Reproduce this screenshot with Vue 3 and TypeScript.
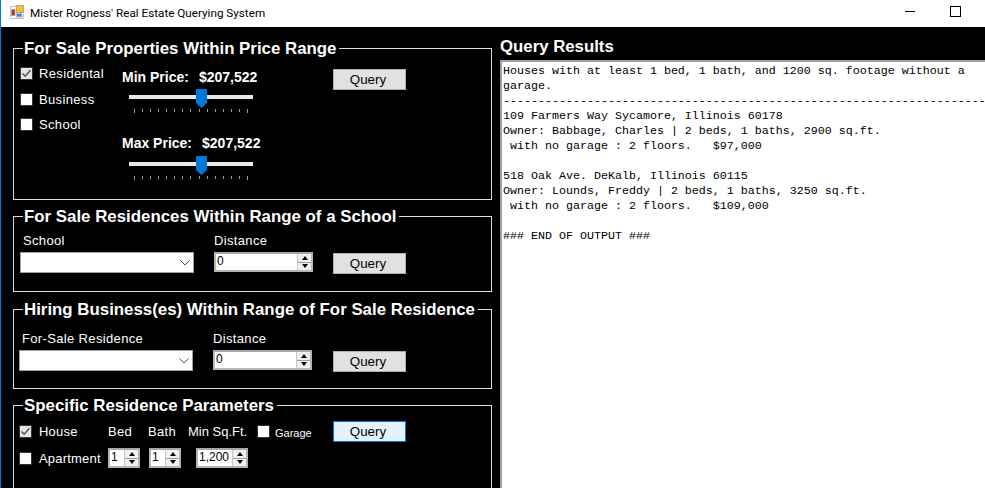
<script setup lang="ts">
const ticks: number[] = Array.from({ length: 15 }, (_, i) => i)
const prices = [
  { label: 'Min Price:', value: '$207,522', cls: 'min' },
  { label: 'Max Price:', value: '$207,522', cls: 'max' },
]
const kinds = [
  { label: 'Residental', checked: true },
  { label: 'Business', checked: false },
  { label: 'School', checked: false },
]
const output = `Houses with at least 1 bed, 1 bath, and 1200 sq. footage without a
garage.
${'-'.repeat(69)}
109 Farmers Way Sycamore, Illinois 60178
Owner: Babbage, Charles | 2 beds, 1 baths, 2900 sq.ft.
 with no garage : 2 floors.   $97,000

518 Oak Ave. DeKalb, Illinois 60115
Owner: Lounds, Freddy | 2 beds, 1 baths, 3250 sq.ft.
 with no garage : 2 floors.   $109,000

### END OF OUTPUT ###`
</script>

<template>
  <div class="window">
    <header class="titlebar">
      <svg class="app-icon" width="14" height="14" viewBox="0 0 14 14">
        <rect x="0" y="0" width="14" height="14" fill="#fff" />
        <path d="M0.5 13.5 V1.5 H6 M0.5 13.5 H13.5 V9" fill="none" stroke="#c4c4c4" />
        <rect x="6.5" y="0.5" width="7" height="7" fill="#f4bf3a" stroke="#c9a45a" />
        <rect x="1.5" y="4.5" width="3.5" height="6" fill="#c8281c" stroke="#a8a8a8" />
        <rect x="6.5" y="8.5" width="5.5" height="3.5" fill="#4a86d8" stroke="#a9c0e0" />
      </svg>
      <span class="title">Mister Rogness' Real Estate Querying System</span>
      <span class="win-min"></span>
      <span class="win-max"></span>
    </header>
    <main class="content">
      <section class="left">
        <fieldset class="group g1">
          <legend>For Sale Properties Within Price Range</legend>
          <div class="row1">
            <div class="kinds">
              <label v-for="k in kinds" :key="k.label" class="check-row">
                <span class="box" :class="{ on: k.checked }">
                  <svg v-if="k.checked" width="11" height="11" viewBox="0 0 11 11">
                    <path d="M1.5 5.5 L4.2 8.2 L9.5 2.2" fill="none" stroke="#555" stroke-width="1.6" />
                  </svg>
                </span>
                <span>{{ k.label }}</span>
              </label>
            </div>
            <div class="prices">
              <div v-for="p in prices" :key="p.cls" class="price" :class="p.cls">
                <div class="price-label"><span>{{ p.label }}</span><span>{{ p.value }}</span></div>
                <div class="slider">
                  <div class="track"></div>
                  <svg class="thumb" width="11" height="19" viewBox="0 0 11 19">
                    <path d="M0 0 H11 V14 L5.5 19 L0 14 Z" fill="#0078d7" />
                  </svg>
                  <div class="ticks">
                    <i v-for="t in ticks" :key="t" :class="{ end: t === 0 || t === 14 }"></i>
                  </div>
                </div>
              </div>
            </div>
            <button class="query q1">Query</button>
          </div>
        </fieldset>

        <fieldset class="group g2">
          <legend>For Sale Residences Within Range of a School</legend>
          <div class="form-row">
            <div class="field combo-field">
              <span class="lbl">School</span>
              <div class="combo">
                <svg width="10" height="6" viewBox="0 0 10 6"><path d="M0.5 0.5 L5 5 L9.5 0.5" fill="none" stroke="#555" /></svg>
              </div>
            </div>
            <div class="field spin-field">
              <span class="lbl">Distance</span>
              <div class="spin wide">
                <span class="val">0</span>
                <span class="arrows"><b class="up"></b><b class="down"></b></span>
              </div>
            </div>
            <button class="query q2">Query</button>
          </div>
        </fieldset>

        <fieldset class="group g3">
          <legend>Hiring Business(es) Within Range of For Sale Residence</legend>
          <div class="form-row">
            <div class="field combo-field">
              <span class="lbl">For-Sale Residence</span>
              <div class="combo">
                <svg width="10" height="6" viewBox="0 0 10 6"><path d="M0.5 0.5 L5 5 L9.5 0.5" fill="none" stroke="#555" /></svg>
              </div>
            </div>
            <div class="field spin-field">
              <span class="lbl">Distance</span>
              <div class="spin wide">
                <span class="val">0</span>
                <span class="arrows"><b class="up"></b><b class="down"></b></span>
              </div>
            </div>
            <button class="query q2">Query</button>
          </div>
        </fieldset>

        <fieldset class="group g4">
          <legend>Specific Residence Parameters</legend>
          <div class="params">
            <label class="check-row">
              <span class="box on">
                <svg width="11" height="11" viewBox="0 0 11 11">
                  <path d="M1.5 5.5 L4.2 8.2 L9.5 2.2" fill="none" stroke="#555" stroke-width="1.6" />
                </svg>
              </span>
              <span>House</span>
            </label>
            <span class="lbl cell">Bed</span>
            <span class="lbl cell">Bath</span>
            <span class="lbl cell tight">Min Sq.Ft.</span>
            <label class="check-row garage">
              <span class="box"></span>
              <span class="garage-text">Garage</span>
            </label>
            <button class="query focused">Query</button>

            <label class="check-row">
              <span class="box"></span>
              <span>Apartment</span>
            </label>
            <div class="spin small">
              <span class="val">1</span>
              <span class="arrows"><b class="up"></b><b class="down"></b></span>
            </div>
            <div class="spin small s2">
              <span class="val">1</span>
              <span class="arrows"><b class="up"></b><b class="down"></b></span>
            </div>
            <div class="spin sqft">
              <span class="val">1,200</span>
              <span class="arrows"><b class="up"></b><b class="down"></b></span>
            </div>
          </div>
        </fieldset>
      </section>

      <section class="right">
        <h2>Query Results</h2>
        <pre class="results">{{ output }}</pre>
      </section>
    </main>
  </div>
</template>

<style>
html, body { margin: 0; overflow: hidden; background: #000; }
</style>

<style scoped>
.window {
  width: 985px;
  height: 488px;
  box-sizing: border-box;
  border-left: 1px solid #0078d7;
  overflow: hidden;
  display: flex;
  flex-direction: column;
  background: #000;
  font-family: "Liberation Sans", Arial, sans-serif;
}
.titlebar {
  height: 27px;
  flex: none;
  background: #fff;
  display: flex;
  align-items: center;
  padding-left: 9px;
  padding-right: 24px;
  box-sizing: border-box;
}
.app-icon { margin-top: -3px; margin-right: 6px; }
.title {
  font-family: Roboto, "Noto Sans", sans-serif;
  font-size: 11.7px;
  color: #000;
  flex: 1;
  position: relative;
  top: -1px;
}
.win-min {
  width: 10px;
  height: 1px;
  background: #000;
  margin-top: -5px;
  margin-right: 35px;
}
.win-max {
  width: 9px;
  height: 9px;
  border: 1px solid #000;
  margin-top: -5px;
}
.content { flex: 1; display: flex; min-height: 0; }
.left {
  width: 499px;
  flex: none;
  box-sizing: border-box;
  padding: 12px 0 0 12px;
  display: flex;
  flex-direction: column;
}
.group {
  width: 479px;
  box-sizing: border-box;
  margin: 0;
  padding: 0;
  min-width: 0;
  border: 1px solid #ddd;
  color: #fff;
}
.group legend {
  margin-left: 9px;
  padding: 0 3px 0 1px;
  font-size: 16.85px;
  font-weight: 700;
  line-height: 18px;
  color: #fff;
  position: relative;
  top: 1px;
}
.g2 { margin-top: 7px; }
.g3 { margin-top: 8px; }
.g4 { margin-top: 7px; padding-bottom: 60px; flex: none; }

.row1 { display: flex; padding: 4px 0 18px 6px; }
.kinds { width: 102px; flex: none; }
.check-row {
  display: flex;
  align-items: center;
  gap: 6px;
  font-size: 13px;
  letter-spacing: 0.35px;
  height: 26px;
  color: #fff;
}
.kinds .check-row { height: 25.5px; }
.box {
  width: 13px;
  height: 13px;
  box-sizing: border-box;
  border: 1px solid #333;
  background: #fff;
  display: flex;
  align-items: center;
  justify-content: center;
  flex: none;
}
.box.on { background: #e6e6e6; }
.prices { width: 211px; flex: none; }
.price { padding-top: 8px; }
.price.max { padding-top: 21px; }
.price-label {
  display: flex;
  gap: 10px;
  font-size: 14px;
  font-weight: 700;
  line-height: 16px;
  color: #fff;
}
.slider {
  position: relative;
  width: 124px;
  height: 25px;
  margin: 4px 0 0 7px;
  padding-top: 6px;
  box-sizing: border-box;
}
.max .slider { margin-top: 5px; }
.track { height: 4px; background: #e7e7e7; }
.thumb { position: absolute; left: 67px; top: 0; }
.ticks {
  display: flex;
  justify-content: space-between;
  align-items: flex-start;
  margin: 10px 5px 0 5px;
}
.ticks i { width: 1px; height: 3px; background: #999; display: block; }
.ticks i.end { height: 4px; }

.query {
  width: 73px;
  height: 21px;
  box-sizing: border-box;
  padding: 0 3px 0 0;
  background: #e1e1e1;
  border: 1px solid #adadad;
  font-family: inherit;
  font-size: 13.33px;
  color: #000;
  flex: none;
}
.query.q1 { margin-top: 8px; }
.query.q2 { margin-top: 20px; margin-left: 20px; }
.query.focused {
  background: #e5f1fb;
  border-color: #0078d7;
}
.form-row { display: flex; padding-left: 6px; }
.g2 .form-row { padding-top: 8px; padding-bottom: 17px; }
.g3 .form-row { padding-top: 13px; padding-left: 5px; padding-bottom: 16px; }
.g3 .query.q2 { margin-left: 21px; }
.field { display: flex; flex-direction: column; }
.combo-field { width: 174px; margin-right: 20px; }
.spin-field { width: 99px; }
.lbl {
  font-size: 13px;
  line-height: 16px;
  letter-spacing: 0.35px;
  color: #fff;
}
.lbl.tight { letter-spacing: 0; }
.field .lbl { padding-left: 3px; margin-bottom: 3px; }
.spin-field .lbl { padding-left: 0; }
.combo {
  height: 21px;
  box-sizing: border-box;
  background: #fff;
  border: 1px solid #a0a0a0;
  display: flex;
  align-items: center;
  justify-content: flex-end;
  padding-right: 3px;
}
.spin {
  height: 20px;
  box-sizing: border-box;
  background: #fff;
  border: 2px solid #b4b4b4;
  border-top-color: #a8a8a8;
  display: flex;
  align-items: stretch;
  color: #000;
  font-size: 12px;
}
.spin .val { flex: 1; line-height: 14px; padding-left: 1px; overflow: hidden; }
.arrows {
  width: 14px;
  flex: none;
  display: flex;
  flex-direction: column;
  background: #f0f0f0;
  border-left: 1px solid #c8c8c8;
  box-sizing: border-box;
}
.arrows b {
  flex: 1;
  display: flex;
  align-items: center;
  justify-content: center;
}
.arrows b.up { border-bottom: 1px solid #9a9a9a; }
.arrows b::after {
  content: "";
  width: 0;
  height: 0;
  border-left: 3.5px solid transparent;
  border-right: 3.5px solid transparent;
}
.arrows b.up::after { border-bottom: 4px solid #000; }
.arrows b.down::after { border-top: 4px solid #000; }

.params {
  display: grid;
  grid-template-columns: 89px 40px 40px 69px 76px 73px;
  grid-template-rows: 21px 20px;
  row-gap: 6px;
  padding: 7px 0 0 5px;
  align-items: center;
}
.params .check-row { height: auto; gap: 7px; letter-spacing: 0.2px; }
.params .garage { gap: 5px; letter-spacing: 0; }
.garage-text { font-size: 11px; padding-top: 2px; }
.small { width: 32px; }
.s2 { margin-left: 1px; }
.sqft { width: 52px; margin-left: 8px; }

.right { flex: 1; min-width: 0; display: flex; flex-direction: column; padding-top: 11px; }
.right h2 {
  margin: 0;
  font-size: 16.8px;
  font-weight: 700;
  line-height: 18px;
  color: #fff;
  height: 22px;
}
.results {
  flex: 1;
  margin: 0;
  box-sizing: border-box;
  background: #fff;
  border-top: 2px solid #a0a0a0;
  border-left: 2px solid #a0a0a0;
  padding: 2px 0 0 1px;
  font-family: "Liberation Mono", "Courier New", monospace;
  font-size: 11.67px;
  line-height: 15px;
  color: #000;
  overflow: hidden;
  white-space: pre;
}
</style>
